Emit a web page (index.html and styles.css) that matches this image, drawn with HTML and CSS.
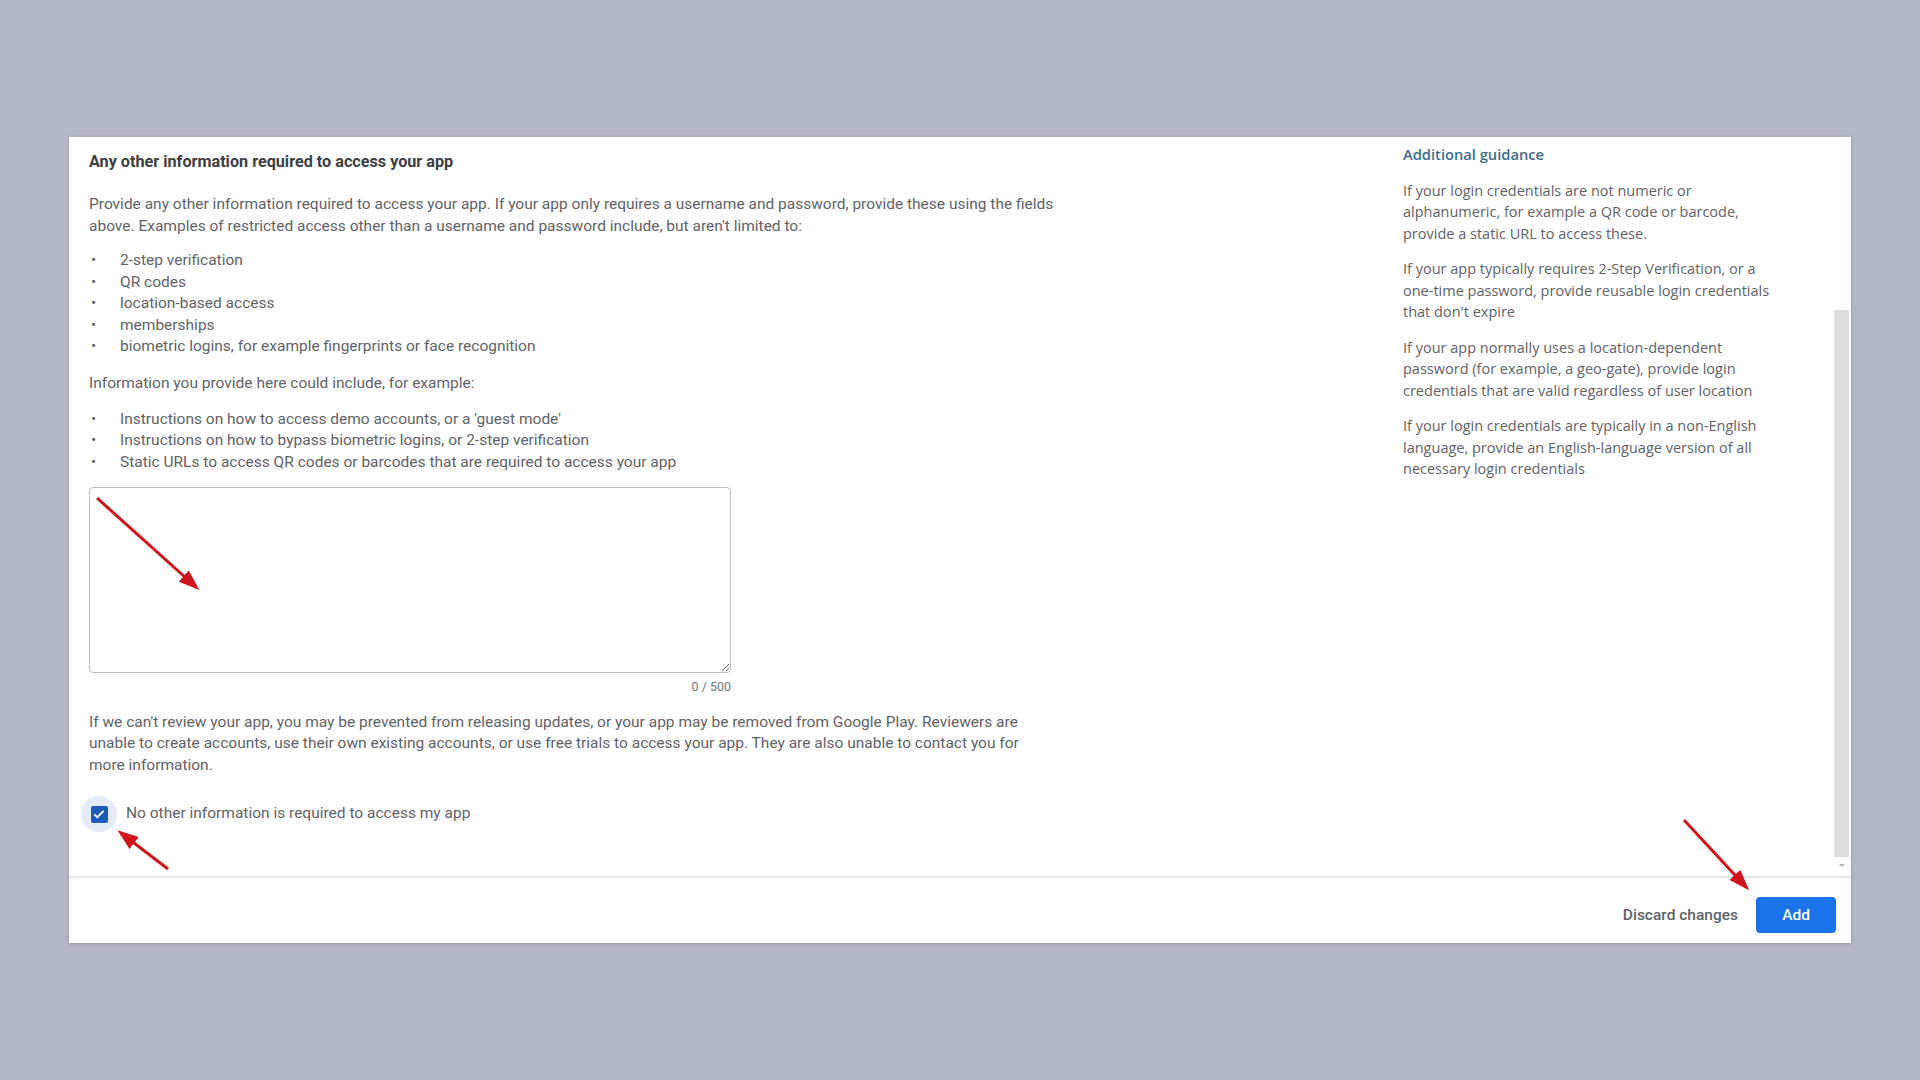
FILE: index.html
```html
<!DOCTYPE html>
<html lang="en">
<head>
    <meta charset="UTF-8">
    <meta name="viewport" content="width=device-width, initial-scale=1.0">
    <title>App access - Any other information</title>
    <link rel="stylesheet" href="styles.css">
</head>
<body>
    <div class="stage">
        <div class="card">
            <div class="card-body">
                <div class="main-col">
                    <h2 class="section-title">Any other information required to access your app</h2>
                    <p>Provide any other information required to access your app. If your app only requires a username and password, provide these using the fields above. Examples of restricted access other than a username and password include, but aren't limited to:</p>
                    <ul class="dot-list">
                        <li>2-step verification</li>
                        <li>QR codes</li>
                        <li>location-based access</li>
                        <li>memberships</li>
                        <li>biometric logins, for example fingerprints or face recognition</li>
                    </ul>
                    <p>Information you provide here could include, for example:</p>
                    <ul class="dot-list examples">
                        <li>Instructions on how to access demo accounts, or a 'guest mode'</li>
                        <li>Instructions on how to bypass biometric logins, or 2-step verification</li>
                        <li>Static URLs to access QR codes or barcodes that are required to access your app</li>
                    </ul>
                    <div class="field">
                        <textarea class="info-input" maxlength="500"></textarea>
                        <div class="counter">0 / 500</div>
                    </div>
                    <p class="warning">If we can't review your app, you may be prevented from releasing updates, or your app may be removed from Google Play. Reviewers are unable to create accounts, use their own existing accounts, or use free trials to access your app. They are also unable to contact you for more information.</p>
                    <label class="check-row">
                        <span class="check-halo">
                            <span class="check-box">
                                <svg width="14" height="14" viewBox="0 0 24 24"><path d="M4 12.5l5 5L20 6.5" fill="none" stroke="#fff" stroke-width="3"/></svg>
                            </span>
                        </span>
                        <span>No other information is required to access my app</span>
                    </label>
                </div>

                <aside class="guidance">
                    <h3>Additional guidance</h3>
                    <p>If your login credentials are not numeric or alphanumeric, for example a QR code or barcode, provide a static URL to access these.</p>
                    <p>If your app typically requires 2-Step Verification, or a one-time password, provide reusable login credentials that don't expire</p>
                    <p>If your app normally uses a location-dependent password (for example, a geo-gate), provide login credentials that are valid regardless of user location</p>
                    <p>If your login credentials are typically in a non-English language, provide an English-language version of all necessary login credentials</p>
                </aside>

                <div class="scrollbar">
                    <div class="scroll-thumb"></div>
                    <div class="scroll-arrow"></div>
                </div>
            </div>
            <div class="card-footer">
                <button class="btn-text">Discard changes</button>
                <button class="btn-primary">Add</button>
            </div>
        </div>

        <!-- red annotation arrows drawn over the screenshot -->
        <svg class="annotations" width="1920" height="1080" viewBox="0 0 1920 1080">
            <defs>
                <marker id="head" markerWidth="7" markerHeight="5" refX="5.5" refY="2.5" orient="auto" markerUnits="strokeWidth">
                    <path d="M0,0 L7,2.5 L0,5 Z" fill="#d1141c"/>
                </marker>
            </defs>
            <line x1="97" y1="498" x2="196" y2="587" stroke="#d1141c" stroke-width="3" marker-end="url(#head)"/>
            <line x1="168" y1="869" x2="121" y2="833" stroke="#d1141c" stroke-width="3" marker-end="url(#head)"/>
            <line x1="1684" y1="820" x2="1746" y2="887" stroke="#d1141c" stroke-width="3" marker-end="url(#head)"/>
        </svg>
    </div>
</body>
</html>
```

FILE: styles.css
```css
body { margin: 0; background: #b4b9c7; font-family: Roboto, "Liberation Sans", Arial, sans-serif; font-size: 15.5px; line-height: 21.5px; color: #5f6368; }
.stage { position: relative; width: 1920px; height: 1080px; padding: 137px 0 0 69px; box-sizing: border-box; }
.card { width: 1782px; height: 806px; background: #fff; box-shadow: 0 1px 4px rgba(60, 64, 67, 0.25); display: flex; flex-direction: column; }
.card-body { display: flex; height: 739px; }
.main-col { flex: 0 0 968px; padding: 14px 0 0 20px; }
.section-title { margin: 0 0 21.5px; font-size: 16.2px; line-height: 21.5px; font-weight: 700; color: #3c4043; }
p { margin: 0; }
.dot-list { list-style: none; margin: 13px 0 15px; padding: 0; }
.dot-list.examples { margin: 14.5px 0 13.5px; }
.dot-list li { position: relative; padding-left: 31px; }
.dot-list li::before { content: "•"; position: absolute; left: 2px; top: 0; color: #5f6368; }
.field { width: 642px; }
.info-input { display: block; width: 642px; height: 186px; box-sizing: border-box; border: 1px solid #b9bcc0; border-radius: 4px; resize: vertical; font-family: inherit; }
.counter { margin-top: 6px; font-size: 12.5px; line-height: 16px; text-align: right; color: #70757a; }
.warning { margin-top: 17px; }
.check-row { display: flex; align-items: center; gap: 9px; margin: 20px 0 0 -8px; color: #5f6368; }
.check-halo { width: 36px; height: 36px; border-radius: 50%; background: #e4ecf8; display: flex; align-items: center; justify-content: center; }
.check-box { width: 17px; height: 17px; border-radius: 2px; background: #1c5bb8; display: flex; align-items: center; justify-content: center; }
.guidance { margin-left: auto; width: 380px; margin-right: 51px; padding-top: 7px; font-family: "Open Sans", Roboto, sans-serif; font-size: 14.5px; }
.guidance h3 { margin: 0 0 14px; font-size: 14.7px; line-height: 21.5px; font-weight: 600; color: #3d6d8f; }
.guidance p { margin-bottom: 14px; }
.scrollbar { width: 15px; margin-right: 2px; padding-top: 173px; display: flex; flex-direction: column; align-items: center; }
.scroll-thumb { width: 15px; height: 547px; background: #dcdee1; }
.scroll-arrow { margin-top: 7px; width: 0; height: 0; border-left: 3px solid transparent; border-right: 3px solid transparent; border-top: 3px solid #b0b3b8; }
.card-footer { flex: 1; border-top: 2px solid #e6e7e9; display: flex; align-items: center; justify-content: flex-end; gap: 18px; padding: 8px 15px 0 0; }
.btn-text { background: none; border: none; padding: 0; font-family: inherit; font-size: 15.5px; font-weight: 500; color: #5f6368; cursor: pointer; }
.btn-primary { width: 80px; height: 36px; border: none; border-radius: 4px; background: #1a73e8; color: #fff; font-family: inherit; font-size: 15.5px; font-weight: 500; cursor: pointer; }
.annotations { position: absolute; top: 0; left: 0; pointer-events: none; }
```
